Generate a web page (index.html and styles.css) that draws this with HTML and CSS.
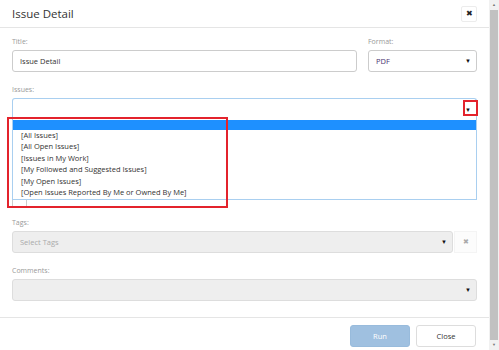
FILE: index.html
```html
<!DOCTYPE html>
<html lang="en">
<head>
    <meta charset="UTF-8">
    <title>Issue Detail</title>
    <link rel="stylesheet" href="styles.css">
</head>
<body>
    <div class="page">
        <div class="modal">
            <!-- Header -->
            <header class="modal-header">
                <h1>Issue Detail</h1>
                <button class="btn-x">&#10006;</button>
            </header>

            <!-- Body -->
            <div class="modal-body">
                <div class="row-2">
                    <div class="field">
                        <label>Title:</label>
                        <div class="input">Issue Detail</div>
                    </div>
                    <div class="field">
                        <label>Format:</label>
                        <div class="select"><span class="value-pdf">PDF</span><span class="caret">&#9660;</span></div>
                    </div>
                </div>

                <div class="field field-issues">
                    <label>Issues:</label>
                    <div class="combo">
                        <div class="select open"><span class="caret">&#9660;</span></div>
                        <ul class="dropdown">
                            <li class="selected"></li>
                            <li>[All Issues]</li>
                            <li>[All Open Issues]</li>
                            <li>[Issues in My Work]</li>
                            <li>[My Followed and Suggested Issues]</li>
                            <li>[My Open Issues]</li>
                            <li>[Open Issues Reported By Me or Owned By Me]</li>
                        </ul>
                        <div class="mark mark-caret"></div>
                        <div class="mark mark-list"></div>
                    </div>
                    <div class="picks"></div>
                    <div class="check-row"><span class="check"></span><span class="check-text">Include Closed</span></div>
                </div>

                <div class="field">
                    <label>Tags:</label>
                    <div class="tags-row">
                        <div class="select disabled"><span class="placeholder">Select Tags</span><span class="caret">&#9660;</span></div>
                        <button class="btn-clear">&#10006;</button>
                    </div>
                </div>

                <div class="field">
                    <label>Comments:</label>
                    <div class="select disabled"><span class="caret">&#9660;</span></div>
                </div>
            </div>

            <!-- Footer -->
            <footer class="modal-footer">
                <button class="btn btn-run">Run</button>
                <button class="btn btn-close">Close</button>
            </footer>
        </div>

        <div class="scrollbar">
            <span class="arrow">&#9650;</span>
            <div class="thumb"></div>
            <span class="arrow">&#9660;</span>
        </div>
    </div>
</body>
</html>
```

FILE: styles.css
```css
* {
    margin: 0;
    padding: 0;
    box-sizing: border-box;
}

body {
    font-family: "Open Sans", "Liberation Sans", sans-serif;
    color: #333;
    background: #fff;
    height: 350px;
    overflow: hidden;
}

.page {
    display: flex;
    height: 350px;
}

.modal {
    flex: 1;
    min-width: 0;
}

/* Header */
.modal-header {
    height: 28px;
    border-bottom: 1px solid #e5e5e5;
    display: flex;
    align-items: center;
    justify-content: space-between;
    padding: 0 12px;
}

.modal-header h1 {
    font-size: 11.5px;
    font-weight: 400;
    color: #333;
}

.btn-x {
    width: 16px;
    height: 16px;
    border: 1px solid #ececec;
    border-radius: 2px;
    background: #fff;
    font-size: 8px;
    color: #222;
    line-height: 14px;
    text-align: center;
}

/* Body */
.modal-body {
    padding: 9px 12px 3px;
}

.row-2 {
    display: grid;
    grid-template-columns: 1fr 109px;
    gap: 11px;
}

.field {
    margin-bottom: 13px;
}

.field label {
    display: block;
    font-size: 7px;
    line-height: 10px;
    color: #999;
    margin-bottom: 3px;
}

.input,
.select {
    height: 22px;
    border: 1px solid #ccc;
    border-radius: 3px;
    background: #fff;
    font-size: 7.5px;
    line-height: 20px;
    padding: 0 5px 0 7px;
    color: #333;
    display: flex;
    align-items: center;
}

.value-pdf {
    color: #4a3570;
}

.caret {
    font-size: 6px;
    color: #111;
    margin-left: auto;
}

/* Issues */
.field-issues {
    margin-bottom: 10px;
}

.combo {
    position: relative;
}

.select.open {
    border-color: #a9cff0;
    border-bottom: none;
    border-radius: 3px 3px 0 0;
}

.dropdown {
    position: absolute;
    top: 100%;
    left: 0;
    right: 0;
    list-style: none;
    background: #fff;
    border: 1px solid #a9cff0;
    border-top: none;
    padding: 0 0 1px;
    z-index: 5;
}

.dropdown li {
    font-size: 7.5px;
    line-height: 11.4px;
    padding: 0 8px;
    color: #333;
    white-space: nowrap;
}

.dropdown li.selected {
    height: 10px;
    background: #1e90ff;
}

.mark {
    position: absolute;
    border: 2px solid #e3232c;
    z-index: 6;
}

.mark-caret {
    left: 451px;
    top: 2px;
    width: 15px;
    height: 16px;
}

.mark-list {
    left: -5px;
    top: 19px;
    width: 221px;
    height: 91px;
}

.picks {
    height: 73px;
}

.check-row {
    display: flex;
    align-items: flex-start;
    gap: 3px;
    height: 15px;
    font-size: 7.5px;
    color: #333;
}

.check {
    width: 15px;
    height: 15px;
    border: 1px solid #ccc;
    border-radius: 2px;
}

.check-text {
    line-height: 8px;
}

/* Tags / Comments */
.tags-row {
    display: flex;
}

.tags-row .select {
    flex: 1;
}

.select.disabled {
    background: #eee;
    border-color: #ddd;
}

.placeholder {
    color: #aaa;
}

.btn-clear {
    width: 23px;
    height: 22px;
    border: 1px solid #f4f4f4;
    background: #fcfcfc;
    color: #aaa;
    font-size: 7px;
    margin-left: 1px;
}

/* Footer */
.modal-footer {
    border-top: 1px solid #e5e5e5;
    display: flex;
    justify-content: flex-end;
    gap: 6px;
    padding: 7px 13px;
}

.btn {
    width: 60px;
    height: 22px;
    border-radius: 3px;
    font-family: inherit;
    font-size: 7.5px;
}

.btn-run {
    background: #9fc0e0;
    border: 1px solid #98bbdc;
    color: #fff;
}

.btn-close {
    background: #fff;
    border: 1px solid #ddd;
    color: #333;
}

/* Fake scrollbar */
.scrollbar {
    width: 10px;
    flex-shrink: 0;
    background: #f1f1f1;
    display: flex;
    flex-direction: column;
    align-items: center;
}

.scrollbar .arrow {
    font-size: 4px;
    color: #777;
    height: 10px;
    line-height: 10px;
}

.thumb {
    flex: 1;
    width: 8px;
    background: #c1c1c1;
}
```
